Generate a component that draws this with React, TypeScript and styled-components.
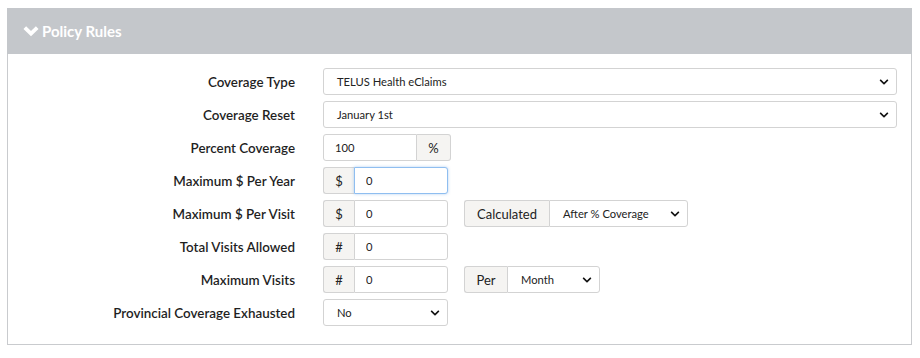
import React, { useState } from 'react';
import styled, { createGlobalStyle } from 'styled-components';
import { FaChevronDown } from 'react-icons/fa';

const GlobalStyle = createGlobalStyle`
  body {
    margin: 0;
    background: #ffffff;
    font-family: Lato, 'Open Sans', sans-serif;
    color: #222;
  }
`;

// chevron in the panel header, a bit heavier than the icon set one
const HeaderChevron = () => (
  <svg width="16" height="12" viewBox="0 0 16 12">
    <path d="M1.8 2.6 L8 8.6 L14.2 2.6" fill="none" stroke="#fff" strokeWidth="3.8" strokeLinejoin="miter" />
  </svg>
);

const App = () => {
  const [perYear, setPerYear] = useState('0');

  return (
    <>
      <GlobalStyle />
      <StyledPage>
        <StyledPanel>
          <StyledHeader>
            <HeaderChevron />
            <span>Policy Rules</span>
          </StyledHeader>
          <StyledForm>
            <StyledLabel>Coverage Type</StyledLabel>
            <StyledSelectBox $width="574px">
              <span>TELUS Health eClaims</span>
              <FaChevronDown size={10} />
            </StyledSelectBox>

            <StyledLabel>Coverage Reset</StyledLabel>
            <StyledSelectBox $width="574px">
              <span>January 1st</span>
              <FaChevronDown size={10} />
            </StyledSelectBox>

            <StyledLabel>Percent Coverage</StyledLabel>
            <StyledGroup>
              <StyledInput $width="94px" $left defaultValue="100" />
              <StyledAddon $width="34px" $right>%</StyledAddon>
            </StyledGroup>

            <StyledLabel>Maximum $ Per Year</StyledLabel>
            <StyledGroup>
              <StyledAddon $width="31px" $left>$</StyledAddon>
              <StyledInput
                $width="94px"
                $right
                $focused
                value={perYear}
                onChange={(e) => setPerYear(e.target.value)}
              />
            </StyledGroup>

            <StyledLabel>Maximum $ Per Visit</StyledLabel>
            <StyledLine>
              <StyledGroup>
                <StyledAddon $width="31px" $left>$</StyledAddon>
                <StyledInput $width="94px" $right defaultValue="0" />
              </StyledGroup>
              <StyledGroup>
                <StyledAddon $width="85px" $left>Calculated</StyledAddon>
                <StyledSelectBox $width="139px" $right>
                  <span>After % Coverage</span>
                  <FaChevronDown size={10} />
                </StyledSelectBox>
              </StyledGroup>
            </StyledLine>

            <StyledLabel>Total Visits Allowed</StyledLabel>
            <StyledGroup>
              <StyledAddon $width="31px" $left>#</StyledAddon>
              <StyledInput $width="94px" $right defaultValue="0" />
            </StyledGroup>

            <StyledLabel>Maximum Visits</StyledLabel>
            <StyledLine>
              <StyledGroup>
                <StyledAddon $width="31px" $left>#</StyledAddon>
                <StyledInput $width="94px" $right defaultValue="0" />
              </StyledGroup>
              <StyledGroup>
                <StyledAddon $width="43px" $left>Per</StyledAddon>
                <StyledSelectBox $width="93px" $right>
                  <span>Month</span>
                  <FaChevronDown size={10} />
                </StyledSelectBox>
              </StyledGroup>
            </StyledLine>

            <StyledLabel>Provincial Coverage Exhausted</StyledLabel>
            <StyledSelectBox $width="125px">
              <span>No</span>
              <FaChevronDown size={10} />
            </StyledSelectBox>
          </StyledForm>
        </StyledPanel>
      </StyledPage>
    </>
  );
};

export default App;

const StyledPage = styled.div`
  padding: 8px 8px 0 7px;
  width: 920px;
  box-sizing: border-box;
`;

const StyledPanel = styled.div`
  border: 1px solid #c9cbce;
  border-top: none;
  width: 905px;
  box-sizing: border-box;
  background: #fff;
`;

const StyledHeader = styled.div`
  display: flex;
  align-items: center;
  gap: 3px;
  height: 46px;
  margin: 0 -1px;
  padding: 0 16px 0 16px;
  background-color: #c4c7cb;
  color: #ffffff;
  font-weight: 700;
  font-size: 15px;
`;

const StyledForm = styled.div`
  display: grid;
  grid-template-columns: 287px 1fr;
  column-gap: 28px;
  row-gap: 6px;
  padding: 14px 15px 18px 0;
`;

const StyledLabel = styled.div`
  display: flex;
  align-items: center;
  justify-content: flex-end;
  height: 27px;
  font-size: 13.4px;
  font-weight: 600;
  color: #1f1f1f;
`;

const StyledLine = styled.div`
  display: flex;
  gap: 16px;
`;

const StyledGroup = styled.div`
  display: flex;
`;

interface BoxProps {
  $width: string;
  $left?: boolean;
  $right?: boolean;
  $focused?: boolean;
}

const radius = ({ $left, $right }: BoxProps) =>
  $left ? '3px 0 0 3px' : $right ? '0 3px 3px 0' : '3px';

const StyledSelectBox = styled.div<BoxProps>`
  display: flex;
  align-items: center;
  justify-content: space-between;
  width: ${(p) => p.$width};
  height: 27px;
  box-sizing: border-box;
  padding: 0 7px 0 13px;
  border: 1px solid #d3d3d3;
  border-radius: ${radius};
  background: #fff;
  font-size: 11.2px;
  color: #222;
  cursor: pointer;
  svg {
    color: #111;
  }
`;

const StyledAddon = styled.div<BoxProps>`
  display: flex;
  align-items: center;
  justify-content: center;
  width: ${(p) => p.$width};
  height: 27px;
  box-sizing: border-box;
  border: 1px solid #d3d3d3;
  ${(p) => (p.$right ? 'border-left: none;' : 'border-right: none;')}
  border-radius: ${radius};
  background: #f5f4f2;
  font-size: 13px;
  color: #222;
`;

const StyledInput = styled.input<BoxProps>`
  width: ${(p) => p.$width};
  height: 27px;
  box-sizing: border-box;
  padding: 0 11px;
  border: 1px solid ${(p) => (p.$focused ? '#8fbef0' : '#d3d3d3')};
  border-radius: ${radius};
  box-shadow: ${(p) => (p.$focused ? '0 0 3px rgba(100, 160, 230, 0.5)' : 'none')};
  font-family: Lato, 'Open Sans', sans-serif;
  font-size: 11.2px;
  color: #222;
  outline: none;
`;
